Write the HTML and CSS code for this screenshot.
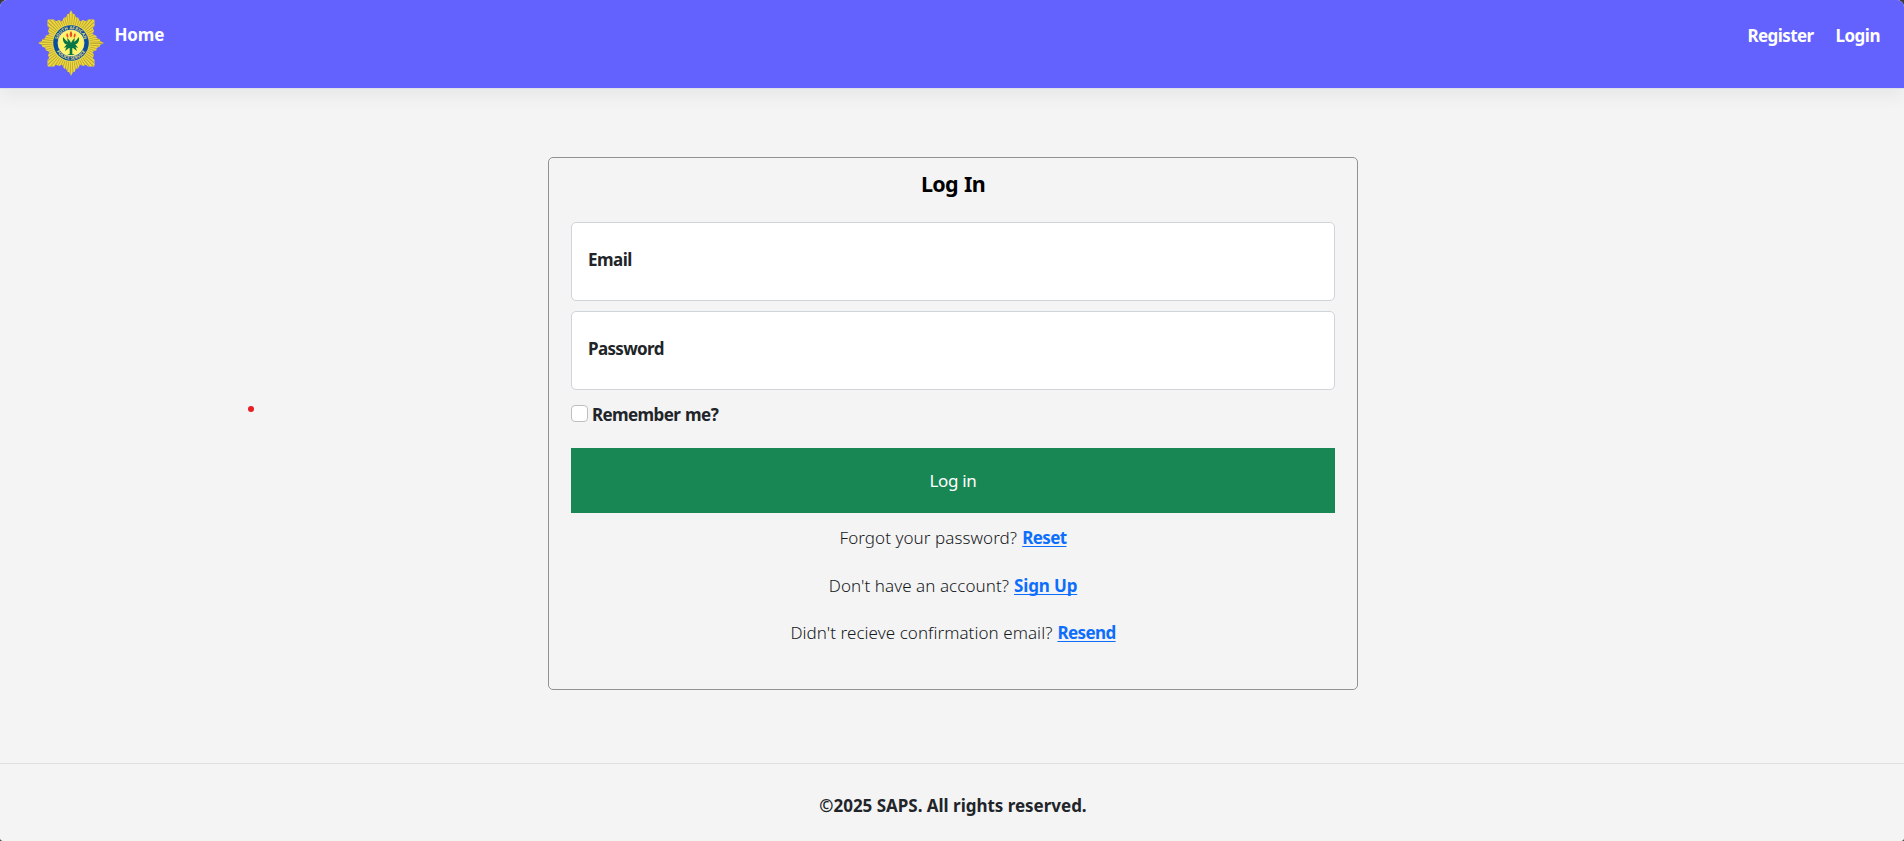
FILE: index.html
```html
<!DOCTYPE html>
<html lang="en">
<head>
<meta charset="utf-8">
<title>Log In</title>
<link rel="stylesheet" href="styles.css">
</head>
<body>
<div class="page">
  <header class="navbar">
    <a class="brand" href="#" aria-label="SAPS">
      <svg class="badge" viewBox="-33 -33 66 66">
        <defs>
          <clipPath id="star"><polygon points="0,-32.8 2,-29 3.5,-29 5,-25.5 7,-25.5 9,-21.5 12,-23 15,-21.8 17,-23.5 23.5,-23.5 23.5,-17 21.8,-15 23,-12 21.5,-9 25.5,-7 25.5,-5 29,-3.5 29,-2 32.8,0 29,2 29,3.5 25.5,5 25.5,7 21.5,9 23,12 21.8,15 23.5,17 23.5,23.5 17,23.5 15,21.8 12,23 9,21.5 7,25.5 5,25.5 3.5,29 2,29 0,32.8 -2,29 -3.5,29 -5,25.5 -7,25.5 -9,21.5 -12,23 -15,21.8 -17,23.5 -23.5,23.5 -23.5,17 -21.8,15 -23,12 -21.5,9 -25.5,7 -25.5,5 -29,3.5 -29,2 -32.8,0 -29,-2 -29,-3.5 -25.5,-5 -25.5,-7 -21.5,-9 -23,-12 -21.8,-15 -23.5,-17 -23.5,-23.5 -17,-23.5 -15,-21.8 -12,-23 -9,-21.5 -7,-25.5 -5,-25.5 -3.5,-29 -2,-29"/></clipPath>
          <path id="arcTop" d="M-13.7 0A13.7 13.7 0 0 1 13.7 0"/>
          <path id="arcBottom" d="M-16.7 0A16.7 16.7 0 0 0 16.7 0"/>
        </defs>
        <g clip-path="url(#star)">
          <circle r="33" fill="#ecd93f"/>
          <circle r="25" fill="none" stroke="#b59c34" stroke-width="17" stroke-dasharray="0.8 1.654"/>
        </g>
        <circle r="18.6" fill="#eadb55"/>
        <circle r="17.8" fill="#0b4f9c"/>
        <circle r="13" fill="#fff36b" stroke="#f5ef9d" stroke-width=".8"/>
        <text class="badge-text"><textPath href="#arcTop" startOffset="50%" text-anchor="middle">SOUTH AFRICAN</textPath></text>
        <text class="badge-text"><textPath href="#arcBottom" startOffset="50%" text-anchor="middle">POLICE SERVICE</textPath></text>
        <path fill="#087647" d="M-1.3 11V5C-3 5-4 7-6 8L-4.5 4-7 5C-6 3-5 2-4 1.5-7 1-8.5-2-8-6-6-4-5-2-3-1L-4-5C-2-4-1-2 0 0 1-2 2-4 4-5L3-1C5-2 6-4 8-6 8.5-2 7 1 4 1.5 5 2 6 3 7 5L4.5 4 6 8C4 7 3 5 1.3 5V11L4 12H-4Z"/>
        <path d="M0-12C-2-9-1.3-7 0-5.5C1.3-7 2-9 0-12ZM-4-10C-5.5-8-4.5-6-3-5C-2-7-3-9-4-10ZM4-10C5.5-8 4.5-6 3-5C2-7 3-9 4-10Z" fill="#ee4c25"/>
      </svg>
    </a>
    <a class="nav-link home" href="#">Home</a>
    <nav class="account">
      <a class="nav-link register" href="#">Register</a>
      <a class="nav-link login" href="#">Login</a>
    </nav>
  </header>
  <main class="content">
    <form class="card">
      <h1 class="title"><span>Log In</span></h1>
      <label class="field"><span class="email">Email</span></label>
      <label class="field"><span class="password">Password</span></label>
      <label class="remember"><input class="check" type="checkbox"><span>Remember me?</span></label>
      <button class="submit" type="button"><span>Log in</span></button>
      <p class="help forgot"><span>Forgot your password?</span><a href="#">Reset</a></p>
      <p class="help signup"><span>Don't have an account?</span><a href="#">Sign Up</a></p>
      <p class="help resend"><span>Didn't recieve confirmation email?</span><a href="#">Resend</a></p>
    </form>
  </main>
  <footer class="footer"><span>©2025 SAPS. All rights reserved.</span></footer>
  <i class="pointer"></i>
</div>
</body>
</html>
```
FILE: styles.css
```css
* { box-sizing: border-box; }
html { background: #3b3b3b; }
body {
  margin: 0;
  font-family: "Noto Sans", "Open Sans", sans-serif;
  font-size: 17px;
  line-height: 24px;
  color: #212529;
}
.page {
  position: relative;
  display: flex;
  flex-direction: column;
  height: 841px;
  background: #f4f4f4;
  border-radius: 7px 7px 3px 3px;
  overflow: hidden;
}
.navbar {
  display: flex;
  align-items: flex-start;
  height: 89px;
  padding: 10px 24px 0 37.5px;
  background: #6462ff;
  border-bottom: 1px solid #dee2e6;
  box-shadow: 0 8px 16px rgba(0, 0, 0, .05);
}
.brand { display: block; height: 66px; }
.badge { display: block; width: 66px; height: 66px; }
.badge-text { font: bold 4.4px "Noto Sans", sans-serif; fill: #e9dc76; }
.nav-link {
  color: #fff;
  font-weight: 700;
  letter-spacing: -.5px;
  text-decoration: none;
  white-space: nowrap;
}
.home { margin: 13px 0 0 11px; letter-spacing: -.15px; }
.account { display: flex; gap: 22px; margin: 14px 0 0 auto; }
.register { letter-spacing: -.6px; }
.content { display: flex; justify-content: center; height: 674px; padding: 68px 0 0 2px; }
.card {
  width: 810px;
  height: 533px;
  padding: 11px 22px 0;
  border: 1px solid #909394;
  border-radius: 5px;
}
.title {
  margin: 0 0 23px;
  font-size: 21.5px;
  font-weight: 700;
  line-height: 30px;
  letter-spacing: -.65px;
  word-spacing: 1px;
  text-align: center;
  color: #000;
}
.field {
  display: flex;
  align-items: center;
  height: 79px;
  margin-bottom: 10px;
  padding: 0 16px 4px;
  border: 1px solid #ced4da;
  border-radius: 5px;
  background: #fff;
  font-weight: 700;
}
.email { letter-spacing: -.55px; }
.password { letter-spacing: -.65px; }
.remember {
  display: flex;
  gap: 4px;
  height: 48px;
  padding-top: 5px;
  font-weight: 700;
  letter-spacing: -.6px;
}
.check {
  appearance: none;
  width: 17px;
  height: 17px;
  margin: 0;
  border: 1px solid #bfbfbf;
  border-radius: 4px;
  background: #fff;
}
.remember span { margin-top: -2px; word-spacing: 1px; }
.submit {
  display: block;
  width: 100%;
  height: 65px;
  margin: 0 0 13px;
  padding: 0;
  border: 0;
  background: #198754;
  color: #fff;
  font: 400 17px/24px "Noto Sans", sans-serif;
  letter-spacing: -.35px;
}
.help {
  display: flex;
  justify-content: center;
  gap: 5px;
  margin: 0 0 23.5px;
  font-weight: 300;
  color: #15191c;
  letter-spacing: .06px;
}
.help a {
  color: #0d6efd;
  font-weight: 700;
  letter-spacing: -.6px;
  text-decoration: underline;
  text-decoration-thickness: 1px;
  text-underline-offset: 2px;
  text-decoration-skip-ink: none;
}
.signup a { letter-spacing: -.15px; }
.footer {
  flex: 1;
  padding: 30px 0 0 2px;
  border-top: 1px solid #dfdfdf;
  text-align: center;
  font-weight: 700;
  letter-spacing: -.02px;
}
.pointer {
  position: absolute;
  left: 248px;
  top: 406px;
  width: 6px;
  height: 6px;
  border-radius: 50%;
  background: #ea1c24;
}
```
